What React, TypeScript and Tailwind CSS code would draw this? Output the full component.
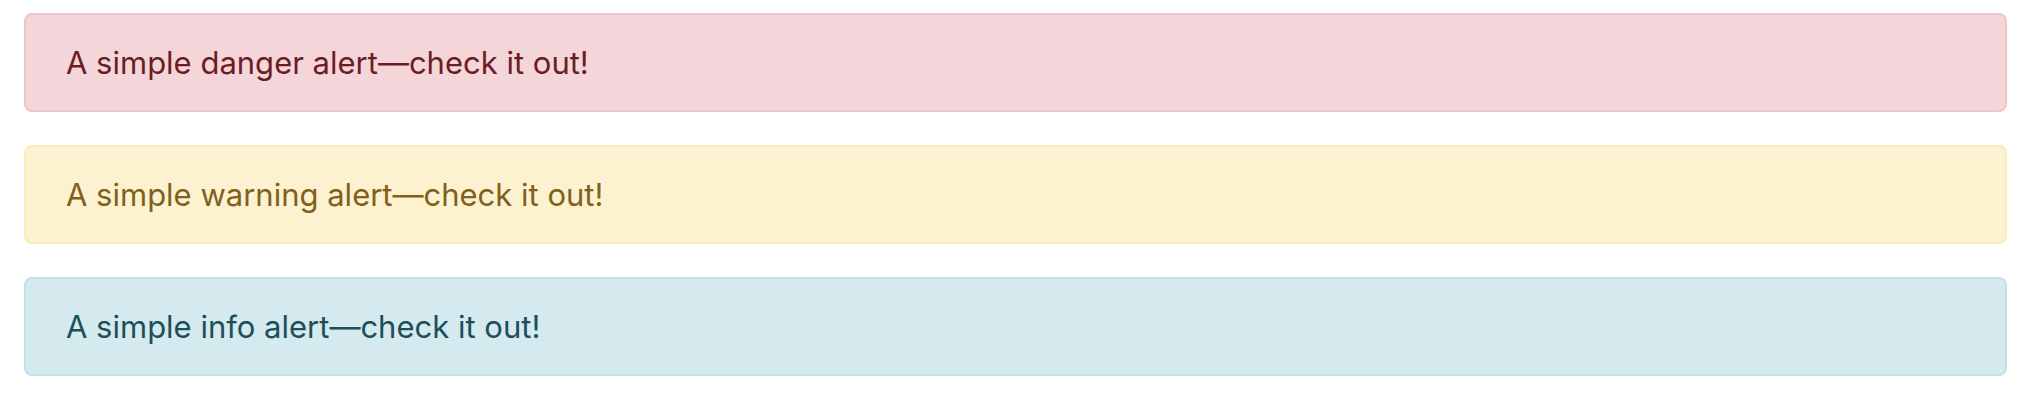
const alerts = [
  {
    text: "A simple danger alert—check it out!",
    className: "bg-[#f4d6da] border-[#efc5cb] text-[#6e1c24]",
  },
  {
    text: "A simple warning alert—check it out!",
    className: "bg-[#fdf2d0] border-[#fbeabb] text-[#80611c]",
  },
  {
    text: "A simple info alert—check it out!",
    className: "bg-[#d4eaef] border-[#c0e1e8] text-[#1d4f5a]",
  },
];

const App = () => {
  return (
    <div className="min-h-screen bg-white pt-[13px] pl-[24px] pr-[21px] font-['Inter',sans-serif]">
      <div className="flex flex-col gap-[33px]">
        {alerts.map((alert, index) => (
          <div
            key={index}
            role="alert"
            className={`h-[99px] flex items-center rounded-[8px] border-2 px-[40px] text-[31px] leading-[48px] ${alert.className}`}
          >
            {alert.text}
          </div>
        ))}
      </div>
    </div>
  );
};

export default App;
